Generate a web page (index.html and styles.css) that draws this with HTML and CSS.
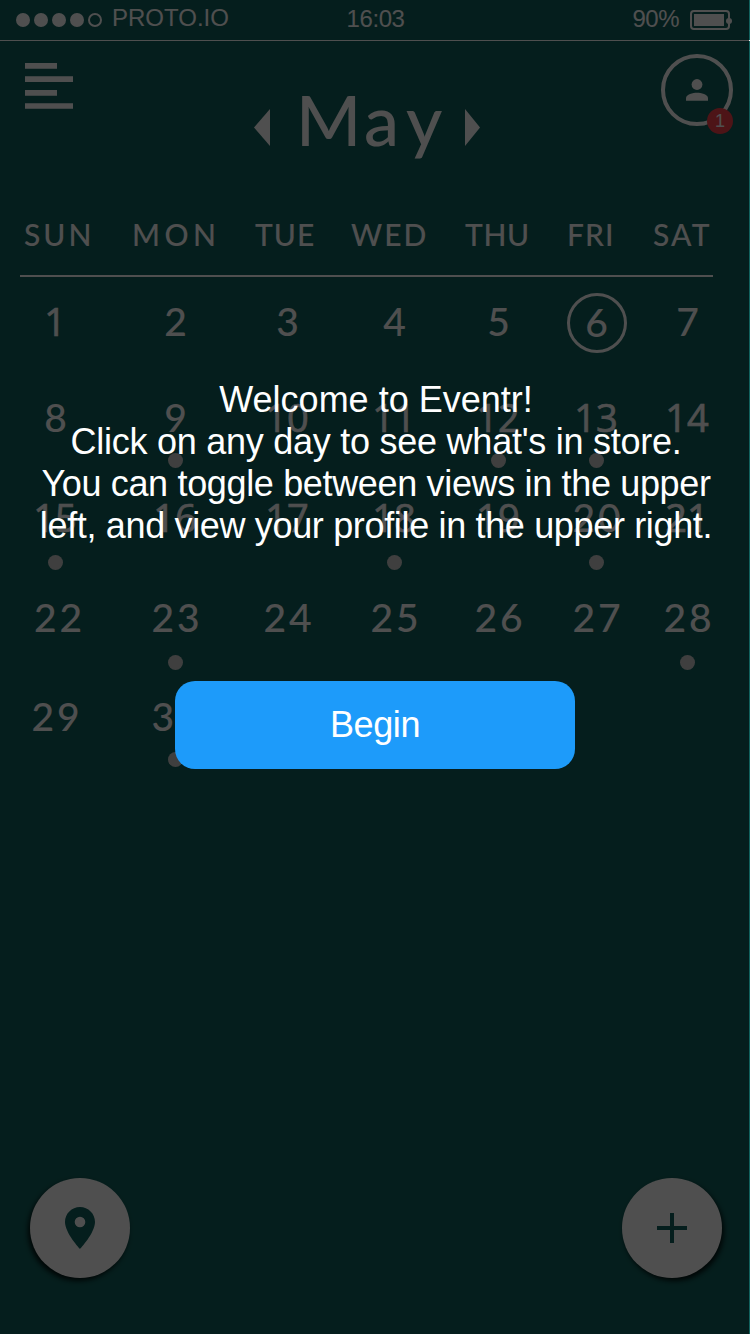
FILE: index.html
```html
<!DOCTYPE html>
<html lang="en">
<head>
<meta charset="utf-8">
<title>Eventr</title>
<link rel="stylesheet" href="styles.css">
</head>
<body>
<div class="screen">
  <header class="status">
    <div class="carrier">
      <div class="signal"><i></i><i></i><i></i><i></i><i class="empty"></i></div>
      <span class="carrier-name">PROTO.IO</span>
    </div>
    <span class="clock">16:03</span>
    <div class="power">
      <span>90%</span>
      <svg width="43" height="20" viewBox="0 0 43 20"><rect x="1" y="1" width="38" height="18" rx="3" fill="none" stroke="currentColor" stroke-width="2"/><rect x="4" y="4" width="30" height="12" fill="currentColor"/><circle cx="39" cy="11" r="3" fill="currentColor"/></svg>
    </div>
  </header>

  <div class="toolbar">
    <svg class="menu" width="48" height="46" viewBox="0 0 48 46" fill="currentColor"><path d="M0 0h32v5.7H0zM0 13.3h48V19H0zM0 27h32v5.7H0zM0 40.2h48v5.6H0z"/></svg>
    <div class="month">
      <svg width="16" height="38" viewBox="0 0 16 38"><path d="M0 18.5 16 0v37z" fill="currentColor"/></svg>
      <h1><span class="m">M</span><span class="a">a</span><span class="y">y</span></h1>
      <svg width="16" height="38" viewBox="0 0 16 38"><path d="M15 18.500 0 0v37z" fill="currentColor"/></svg>
    </div>
    <div class="profile">
      <svg width="22" height="22" viewBox="0 0 22 22" fill="currentColor"><circle cx="11" cy="5.5" r="5.4"/><path d="M0 21.7v-2.5c0-3.8 7-5.4 11-5.4s11 1.600 11 5.400v2.500z"/></svg>
      <span class="badge">1</span>
    </div>
  </div>

  <main class="calendar">
    <div class="week names"><span class="sun">SUN</span><span class="mon">MON</span><span class="tue">TUE</span><span class="wed">WED</span><span class="thu">THU</span><span class="fri">FRI</span><span class="sat">SAT</span></div>
    <div class="days">
      <div class="day one"><b>1</b></div><div class="day"><b>2</b></div><div class="day"><b>3</b></div><div class="day"><b>4</b></div><div class="day"><b>5</b></div><div class="day today"><b>6</b></div><div class="day"><b>7</b></div>
      <div class="day"><b>8</b></div><div class="day event"><b>9</b></div><div class="day teen"><b>10</b></div><div class="day teen"><b>11</b></div><div class="day teen event"><b>12</b></div><div class="day teen event"><b>13</b></div><div class="day teen"><b>14</b></div>
      <div class="day teen event low"><b>15</b></div><div class="day teen"><b>16</b></div><div class="day teen"><b>17</b></div><div class="day teen event low"><b>18</b></div><div class="day teen"><b>19</b></div><div class="day event low"><b>20</b></div><div class="day teen"><b>21</b></div>
      <div class="day inset"><b>22</b></div><div class="day event low"><b>23</b></div><div class="day"><b>24</b></div><div class="day"><b>25</b></div><div class="day"><b>26</b></div><div class="day"><b>27</b></div><div class="day event low"><b>28</b></div>
      <div class="day"><b>29</b></div><div class="day event"><b>30</b></div>
    </div>
  </main>

  <footer class="actions">
    <div class="fab left"><svg width="30" height="42" viewBox="0 0 30 42"><path fill-rule="evenodd" fill="currentColor" d="M15 0C6.700 0 0 6.700 0 15c0 11 15 27 15 27s15-16 15-27C30 6.700 23.300 0 15 0zm0 20.300a5.300 5.300 0 1 1 0-10.600 5.300 5.300 0 0 1 0 10.600z"/></svg></div>
    <div class="fab right"><svg width="30" height="30" viewBox="0 0 30 30"><path d="M15 0v30M0 15h30" stroke="currentColor" stroke-width="4"/></svg></div>
  </footer>
</div>

<div class="overlay">
  <div class="welcome">
    <p>Welcome to Eventr!</p>
    <p class="snug">Click on any day to see what's in store.</p>
    <p class="tight">You can toggle between views in the upper</p>
    <p class="tight">left, and view your profile in the upper right.</p>
  </div>
  <button class="begin">Begin</button>
</div>
</body>
</html>
```
FILE: styles.css
```css
* { box-sizing: border-box; }
body {
  margin: 0;
  width: 750px;
  height: 1334px;
  overflow: hidden;
  position: relative;
  font-family: "Liberation Sans", Arial, sans-serif;
}
.screen {
  width: 750px;
  height: 1334px;
  display: flex;
  flex-direction: column;
  background: #11615d;
  color: #fff;
}
svg { display: block; flex: none; }

.status {
  height: 41px;
  flex: none;
  border-bottom: 1px solid #fff;
  display: grid;
  grid-template-columns: 1fr 60px 1fr;
  padding: 0 17px 0 16px;
  font-size: 24px;
  line-height: 38px;
}
.carrier, .power { display: flex; align-items: center; }
.carrier { gap: 10px; }
.carrier-name { line-height: 36px; padding-bottom: 4px; }
.clock { padding-left: 2px; letter-spacing: -.4px; }
.signal { display: flex; gap: 4px; }
.signal i { width: 14px; height: 14px; border-radius: 50%; background: #fff; }
.signal .empty { background: none; border: 2px solid #fff; }
.power { justify-content: flex-end; gap: 11px; }
.power span { padding-bottom: 2px; letter-spacing: -.5px; }

.toolbar {
  height: 163px;
  flex: none;
  display: grid;
  grid-template-columns: 48px 1fr 72px;
  padding: 13px 17px 0 25px;
}
.menu { margin-top: 9px; }
.month {
  display: flex;
  align-items: flex-start;
  margin-left: 181px;
  padding-top: 55px;
}
.month h1 {
  display: flex;
  width: 195px;
  margin: -31px 0 0;
  padding-left: 26px;
  font: 500 70px/82px Lato, sans-serif;
}
.month .m { width: 68px; }
.month .a { width: 42px; }
.profile {
  position: relative;
  width: 72px;
  height: 72px;
  border: 4px solid #fff;
  border-radius: 50%;
  display: grid;
  place-items: center;
}
.badge {
  position: absolute;
  right: -4px;
  bottom: -12px;
  width: 26px;
  height: 26px;
  border-radius: 50%;
  background: #f8414b;
  font-size: 18px;
  line-height: 26px;
  text-align: center;
}

.calendar { flex: 1; font-family: Lato, sans-serif; font-weight: 500; }
.week {
  display: flex;
  width: 693px;
  height: 73px;
  margin-left: 20px;
  border-bottom: 2px solid #fff;
  font-size: 30px;
  line-height: 60px;
}
.week span { flex: none; }
.sun { width: 110px; padding-left: 4px; letter-spacing: 3px; }
.mon { width: 125px; padding-left: 2px; letter-spacing: 4.500px; }
.tue { width: 96px; letter-spacing: 1px; }
.wed { width: 114px; letter-spacing: 2px; }
.thu { width: 101px; letter-spacing: .6px; }
.fri { width: 87px; padding-left: 1px; letter-spacing: 1px; }
.sat { letter-spacing: 2.200px; }
.days {
  display: grid;
  grid-template-columns: 108px 132px 92px 122px 86px 110px 72px;
  grid-template-rows: 96px 100px 100px 99px 100px;
  margin: 14px 0 0 1px;
}
.day { display: flex; flex-direction: column; align-items: center; padding-top: 10px; }
.day b {
  font-weight: 500;
  font-size: 39px;
  line-height: 40px;
  letter-spacing: 3px;
  margin-right: -4px;
}
.day.one b, .day.teen b {
  font-family: "Open Sans", sans-serif;
  font-size: 38px;
  letter-spacing: 0;
  margin-right: 0;
  -webkit-text-stroke: .7px #fff;
}
.day.inset b { margin-right: -9px; }
.today b { width: 60px; height: 60px; margin: -8px -1px -10px 0; border: 3px solid #fff; border-radius: 50%; line-height: 53px; text-align: center; letter-spacing: 0; }
.day.today b { margin-right: -1px; letter-spacing: 0; }
.event::after { content: ""; width: 15px; height: 15px; margin-top: 16px; border-radius: 50%; background: #ccc; }
.event.low::after { margin-top: 18px; }

.actions { display: flex; justify-content: space-between; padding: 0 28px 56px 30px; color: #11615d; }
.fab { width: 100px; height: 100px; border-radius: 50%; background: #fff; display: grid; place-items: center; }
.fab.left { box-shadow: -2px 3px 5px rgba(0, 0, 0, .8); }
.fab.right { box-shadow: 2px 3px 5px rgba(0, 0, 0, .8); }

.overlay {
  position: absolute;
  top: 0;
  left: 0;
  width: 749px;
  height: 1334px;
  background: rgba(0, 0, 0, .69);
  color: #fff;
  display: flex;
  flex-direction: column;
  align-items: center;
  font-size: 36px;
}
.welcome { margin: 379px 0 134px 3px; width: 730px; text-align: center; line-height: 42px; }
.welcome p { margin: 0; white-space: nowrap; }
.snug { letter-spacing: -.25px; }
.tight { letter-spacing: -.34px; }
.begin {
  width: 400px;
  height: 88px;
  margin-left: 1px;
  padding: 0;
  border: 0;
  border-radius: 20px;
  background: #1d9bfa;
  color: #fff;
  font: 36px "Liberation Sans", Arial, sans-serif;
  letter-spacing: -.4px;
}
```
